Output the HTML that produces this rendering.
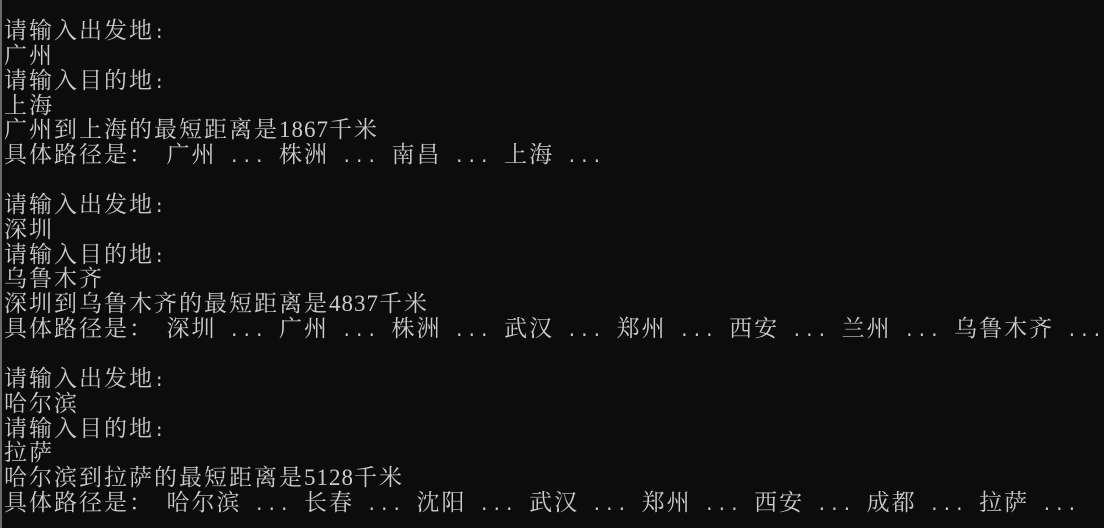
<!DOCTYPE html>
<html><head><meta charset="utf-8"><style>
html,body{margin:0;padding:0;background:#0c0c0c;width:1104px;height:528px;overflow:hidden}
.edge{position:absolute;left:0;top:0;width:2px;height:528px;background:#6a6a6a}
.t{position:absolute;left:4px;top:17px;color:#cccccc;font-family:"Noto Serif CJK SC","WenQuanYi Zen Hei",serif;font-size:23px;letter-spacing:2px}
.t div{height:24.85px;line-height:24.85px;overflow:visible;white-space:pre}
.d{font-family:"Liberation Serif",serif;font-size:23px;letter-spacing:1px;line-height:0}
.m{font-family:"Liberation Mono",monospace;font-size:17.5px;line-height:0}
</style></head><body><div class="edge"></div><div class="t">
<div>请输入出发地<span class="m">:</span></div>
<div>广州</div>
<div>请输入目的地<span class="m">:</span></div>
<div>上海</div>
<div>广州到上海的最短距离是<span class="d">1867</span>千米</div>
<div>具体路径是：<span class="m"> </span>广州<span class="m"> ... </span>株洲<span class="m"> ... </span>南昌<span class="m"> ... </span>上海<span class="m"> ...</span></div>
<div></div>
<div>请输入出发地<span class="m">:</span></div>
<div>深圳</div>
<div>请输入目的地<span class="m">:</span></div>
<div>乌鲁木齐</div>
<div>深圳到乌鲁木齐的最短距离是<span class="d">4837</span>千米</div>
<div>具体路径是：<span class="m"> </span>深圳<span class="m"> ... </span>广州<span class="m"> ... </span>株洲<span class="m"> ... </span>武汉<span class="m"> ... </span>郑州<span class="m"> ... </span>西安<span class="m"> ... </span>兰州<span class="m"> ... </span>乌鲁木齐<span class="m"> ...</span></div>
<div></div>
<div>请输入出发地<span class="m">:</span></div>
<div>哈尔滨</div>
<div>请输入目的地<span class="m">:</span></div>
<div>拉萨</div>
<div>哈尔滨到拉萨的最短距离是<span class="d">5128</span>千米</div>
<div>具体路径是：<span class="m"> </span>哈尔滨<span class="m"> ... </span>长春<span class="m"> ... </span>沈阳<span class="m"> ... </span>武汉<span class="m"> ... </span>郑州<span class="m"> ... </span>西安<span class="m"> ... </span>成都<span class="m"> ... </span>拉萨<span class="m"> ...</span></div>
</div></body></html>
